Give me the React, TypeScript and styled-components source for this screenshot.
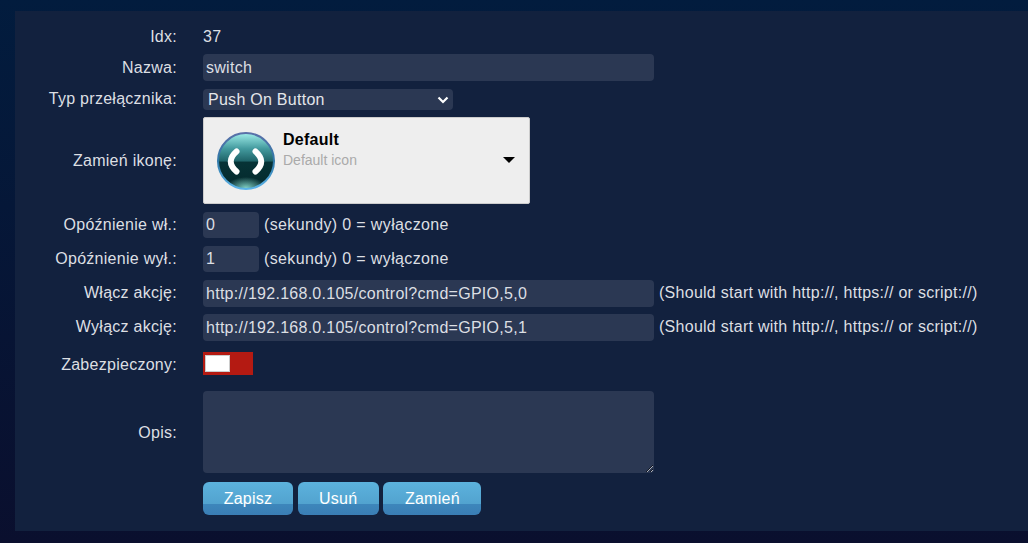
import React from "react";
import styled, { createGlobalStyle } from "styled-components";

const Global = createGlobalStyle`
  html, body { margin: 0; padding: 0; height: 100%; overflow: hidden; }
  body {
    background: linear-gradient(180deg, #021c3e 0%, #0a0f2e 100%);
    font-family: "Liberation Sans", Arial, sans-serif;
    font-size: 16px;
    letter-spacing: 0.27px;
    color: #dcdfe3;
  }
`;

const Panel = styled.form`
  margin: 11px 0 0 15px;
  height: 520px;
  box-sizing: border-box;
  padding-top: 16px;
  background: #12213e;
`;

const Row = styled.div<{ $top?: number }>`
  display: flex;
  align-items: center;
  margin-top: ${(p) => p.$top ?? 8}px;
`;

const Label = styled.label<{ $shift?: number }>`
  width: 162px;
  flex: none;
  margin-right: 26px;
  margin-top: ${(p) => p.$shift ?? 0}px;
  text-align: right;
  line-height: 20px;
`;

const Value = styled.span`
  line-height: 20px;
`;

const TextInput = styled.input<{ $w: number }>`
  box-sizing: border-box;
  width: ${(p) => p.$w}px;
  height: 27px;
  padding: 0 3px;
  border: 0;
  outline: 0;
  border-radius: 4px;
  background: #2b3853;
  color: #dcdfe3;
  letter-spacing: 0.27px;
  font: 16px "Liberation Sans", Arial, sans-serif;
`;

const NumberInput = styled(TextInput)`
  height: 26px;
`;

const Hint = styled.span<{ $left: number; $shift?: number; $spacing?: number }>`
  margin-left: ${(p) => p.$left}px;
  margin-top: ${(p) => p.$shift ?? 0}px;
  letter-spacing: ${(p) => p.$spacing ?? 0.27}px;
  line-height: 20px;
`;

const chevron =
  "data:image/svg+xml,%3Csvg xmlns='http://www.w3.org/2000/svg' width='12' height='8' viewBox='0 0 12 8'%3E%3Cpath d='M1.5 1.5 6 6l4.5-4.5' fill='none' stroke='%23fff' stroke-width='2.2'/%3E%3C/svg%3E";

const Select = styled.select`
  box-sizing: border-box;
  appearance: none;
  width: 250px;
  height: 21px;
  padding: 0 0 0 5px;
  border: 0;
  outline: 0;
  border-radius: 4px;
  background: #2b3853 url("${chevron}") no-repeat right 4px center;
  color: #e4e6ea;
  letter-spacing: 0.27px;
  font: 16px "Liberation Sans", Arial, sans-serif;
`;

const IconPicker = styled.div`
  box-sizing: border-box;
  display: flex;
  align-items: center;
  width: 327px;
  height: 87px;
  padding: 0 14px 0 13px;
  border: 1px solid #ccc;
  border-radius: 2px;
  background: #eee;
`;

const IconText = styled.div`
  flex: 1;
  margin-left: 8px;
  margin-top: -21px;
`;

const IconName = styled.div`
  font-size: 16px;
  font-weight: 700;
  line-height: 20px;
  color: #000;
`;

const IconDesc = styled.div`
  font-size: 14px;
  letter-spacing: 0;
  line-height: 20px;
  color: #aaa;
`;

const Caret = styled.div`
  width: 0;
  height: 0;
  margin-top: -1px;
  border-left: 6px solid transparent;
  border-right: 6px solid transparent;
  border-top: 6px solid #000;
`;

const Switch = styled.div`
  box-sizing: border-box;
  display: flex;
  width: 50px;
  height: 23px;
  padding: 3px 0 3px 2px;
  background: #b41a12;
`;

const Knob = styled.div`
  box-sizing: border-box;
  width: 25px;
  height: 17px;
  border: 1px solid #ccc;
  background: #fff;
`;

const Area = styled.textarea`
  box-sizing: border-box;
  display: block;
  width: 451px;
  height: 82px;
  padding: 3px;
  border: 0;
  outline: 0;
  border-radius: 4px;
  background: #2b3853;
  color: #dcdfe3;
  color-scheme: dark;
  font: 16px "Liberation Sans", Arial, sans-serif;
`;

const Buttons = styled.div`
  display: flex;
  gap: 4.7px;
  margin-left: 188px;
  margin-top: 9px;
`;

const Button = styled.button<{ $w: number }>`
  box-sizing: border-box;
  width: ${(p) => p.$w}px;
  height: 33px;
  padding: 0;
  border: 0;
  border-radius: 6px;
  background: linear-gradient(180deg, #5cb2dd 0%, #52a3cf 66%, #3d86bb 68%, #3a7eb5 100%);
  color: #fff;
  letter-spacing: 0.27px;
  font: 16px "Liberation Sans", Arial, sans-serif;
`;

const DefaultIcon = () => (
  <svg width="58" height="58" viewBox="0 0 58 58">
    <defs>
      <linearGradient id="orb" x1="0" y1="0" x2="0" y2="1">
        <stop offset="0" stopColor="#a0eeea" />
        <stop offset="0.28" stopColor="#439a9e" />
        <stop offset="0.5" stopColor="#1f6469" />
        <stop offset="0.52" stopColor="#063336" />
        <stop offset="1" stopColor="#04282c" />
      </linearGradient>
      <radialGradient id="glow" cx="0.5" cy="0.5" r="0.5">
        <stop offset="0" stopColor="#7fd0c4" />
        <stop offset="1" stopColor="#7fd0c4" stopOpacity="0" />
      </radialGradient>
      <linearGradient id="rim" x1="0" y1="0" x2="0" y2="1">
        <stop offset="0" stopColor="#5a70a8" />
        <stop offset="0.5" stopColor="#2f78a8" />
        <stop offset="1" stopColor="#5cb4e8" />
      </linearGradient>
      <clipPath id="orbClip">
        <circle cx="29" cy="29" r="28" />
      </clipPath>
    </defs>
    <circle cx="29" cy="29" r="28" fill="url(#orb)" />
    <ellipse cx="29" cy="56" rx="20" ry="11" fill="url(#glow)" clipPath="url(#orbClip)" />
    <circle cx="29" cy="29" r="28" fill="none" stroke="url(#rim)" strokeWidth="2" />
    <path d="M19.5 19.5 Q8 29.5 19.5 39.5" fill="none" stroke="#fff" strokeWidth="6" strokeLinecap="round" />
    <path d="M38.5 19.5 Q50 29.5 38.5 39.5" fill="none" stroke="#fff" strokeWidth="6" strokeLinecap="round" />
  </svg>
);

const hint = "(Should start with http://, https:// or script://)";

export default function App() {
  return (
    <>
      <Global />
      <Panel>
        <Row $top={0}>
          <Label>Idx:</Label>
          <Value>37</Value>
        </Row>
        <Row $top={7}>
          <Label>Nazwa:</Label>
          <TextInput $w={451} defaultValue="switch" />
        </Row>
        <Row>
          <Label $shift={-2}>Typ przełącznika:</Label>
          <Select defaultValue="push">
            <option value="push">Push On Button</option>
          </Select>
        </Row>
        <Row $top={7}>
          <Label>Zamień ikonę:</Label>
          <IconPicker>
            <DefaultIcon />
            <IconText>
              <IconName>Default</IconName>
              <IconDesc>Default icon</IconDesc>
            </IconText>
            <Caret />
          </IconPicker>
        </Row>
        <Row>
          <Label>Opóźnienie wł.:</Label>
          <NumberInput $w={56} defaultValue="0" />
          <Hint $left={5} $spacing={0.36}>(sekundy) 0 = wyłączone</Hint>
        </Row>
        <Row>
          <Label>Opóźnienie wył.:</Label>
          <NumberInput $w={56} defaultValue="1" />
          <Hint $left={5} $spacing={0.36}>(sekundy) 0 = wyłączone</Hint>
        </Row>
        <Row>
          <Label $shift={-2}>Włącz akcję:</Label>
          <TextInput $w={451} defaultValue="http://192.168.0.105/control?cmd=GPIO,5,0" />
          <Hint $left={5} $shift={-2}>{hint}</Hint>
        </Row>
        <Row $top={7}>
          <Label $shift={-2}>Wyłącz akcję:</Label>
          <TextInput $w={451} defaultValue="http://192.168.0.105/control?cmd=GPIO,5,1" />
          <Hint $left={5} $shift={-2}>{hint}</Hint>
        </Row>
        <Row $top={11}>
          <Label $shift={3}>Zabezpieczony:</Label>
          <Switch>
            <Knob />
          </Switch>
        </Row>
        <Row $top={16}>
          <Label $shift={2}>Opis:</Label>
          <Area />
        </Row>
        <Buttons>
          <Button type="button" $w={90}>Zapisz</Button>
          <Button type="button" $w={81}>Usuń</Button>
          <Button type="button" $w={98}>Zamień</Button>
        </Buttons>
      </Panel>
    </>
  );
}
